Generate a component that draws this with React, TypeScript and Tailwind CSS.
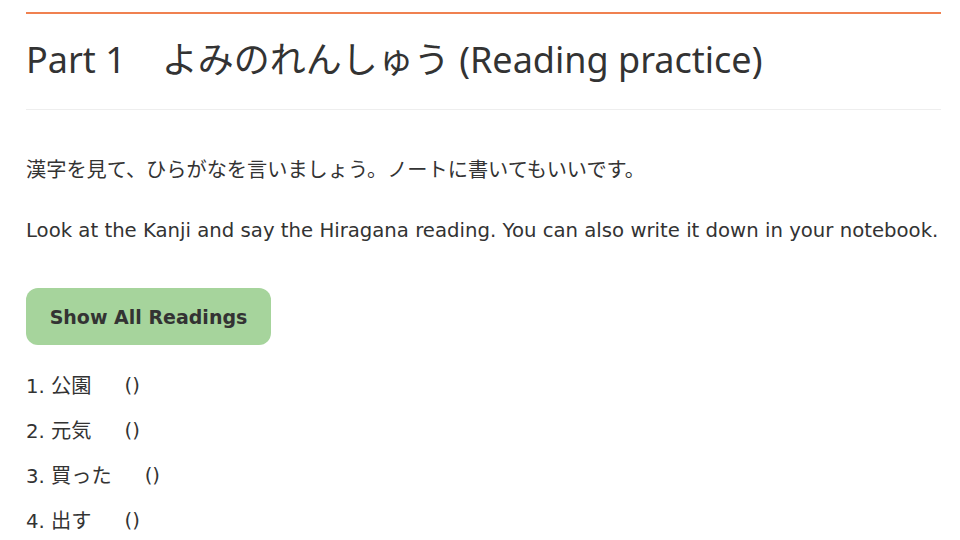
const ITEMS = [
  { n: 1, kanji: "公園" },
  { n: 2, kanji: "元気" },
  { n: 3, kanji: "買った" },
  { n: 4, kanji: "出す" },
];

const BODY = { fontFamily: '"DejaVu Sans", "Noto Sans CJK JP", sans-serif' };

export default function App() {
  return (
    <div
      className="min-h-[540px] bg-white text-[#333] px-[26px] pt-3"
      style={{ fontFamily: '"Noto Sans", "Noto Sans CJK JP", sans-serif' }}
    >
      <div className="w-[915px]">
        <h2 className="border-t-2 border-[#f08150] border-b border-b-[#eeeeee] pt-[21px] pb-[24px] text-[36px] leading-[50px] font-normal">
          Part 1　よみのれんしゅう (Reading practice)
        </h2>
        <div style={BODY} className="text-[19.7px] leading-[28px]">
          <p className="mt-[46px] text-[20.2px]">
            漢字を見て、ひらがなを言いましょう。ノートに書いてもいいです。
          </p>
          <p className="mt-[33px]">
            Look at the Kanji and say the Hiragana reading. You can also write
            it down in your notebook.
          </p>
          <button className="mt-[43px] h-[57px] w-[245px] rounded-xl bg-[#a6d49c] text-[19px] font-bold text-[#333]">
            Show All Readings
          </button>
          <ol className="mt-[27px] flex flex-col gap-[16.1px]">
            {ITEMS.map((it) => (
              <li key={it.n} className="flex">
                <span>
                  {it.n}. <span className="text-[20.2px]">{it.kanji}</span>
                </span>
                <span className="ml-[33px]">()</span>
              </li>
            ))}
          </ol>
        </div>
      </div>
    </div>
  );
}
